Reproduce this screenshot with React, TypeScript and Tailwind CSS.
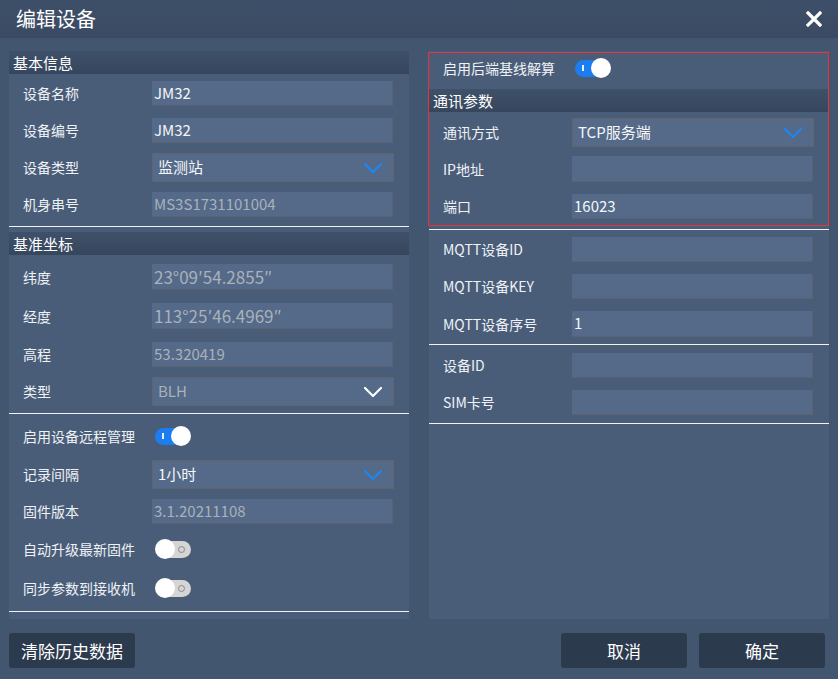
import { ReactNode } from "react";

const font = { fontFamily: '"Noto Sans CJK SC", "Noto Sans", sans-serif' };

function SectionTitle({ children }: { children: ReactNode }) {
  return (
    <div className="flex h-[23px] items-center bg-gradient-to-b from-[#3f506a] to-[#36465d] px-[4px] text-[15px] leading-none text-white">
      {children}
    </div>
  );
}

function Divider({ className = "" }: { className?: string }) {
  return <div className={`h-px bg-[#f2f2f2] ${className}`} />;
}

function Field({
  label,
  value = "",
  muted = false,
  big = false,
  className = "",
  h = "h-[25px]",
}: {
  label: string;
  value?: string;
  muted?: boolean;
  big?: boolean;
  className?: string;
  h?: string;
}) {
  return (
    <div className={`flex items-center ${className}`}>
      <div className="w-[143px] pl-[14px] text-[14px] text-[#eef2f7]">{label}</div>
      <div
        className={`flex w-[241px] items-center border-r border-b border-[#5a6170] bg-[#546a88] px-[2px] ${h} ${
          big ? "text-[17px]" : "text-[15px]"
        } ${muted ? "text-[#a9b1bb]" : "text-[#f4f6f9]"}`}
      >
        {value}
      </div>
    </div>
  );
}

function SelectField({
  label,
  value,
  muted = false,
  className = "",
}: {
  label: string;
  value: string;
  muted?: boolean;
  className?: string;
}) {
  return (
    <div className={`flex items-center ${className}`}>
      <div className="w-[143px] pl-[14px] text-[14px] text-[#eef2f7]">{label}</div>
      <div
        className={`flex h-[29px] w-[242px] items-center justify-between border border-[#62646a] bg-[#546a88] pl-[5px] pr-[10px] text-[15px] ${
          muted ? "text-[#a9b1bb]" : "text-[#f4f6f9]"
        }`}
      >
        <span>{value}</span>
        <svg width="20" height="12" viewBox="0 0 20 12" fill="none">
          <path
            d="M2 2 L10 10 L18 2"
            stroke={muted ? "#ffffff" : "#1e86f2"}
            strokeWidth="2.2"
            strokeLinecap="round"
            strokeLinejoin="round"
          />
        </svg>
      </div>
    </div>
  );
}

function Toggle({ on }: { on: boolean }) {
  if (on) {
    return (
      <div className="relative h-[22px] w-[36px]">
        <div className="absolute left-0 top-[3px] h-[17px] w-[28px] rounded-full bg-[#1b7df0]" />
        <div className="absolute left-[7px] top-[8px] h-[6px] w-[2px] bg-white/90" />
        <div className="absolute right-0 top-[1px] h-[20px] w-[20px] rounded-full bg-white" />
      </div>
    );
  }
  return (
    <div className="relative h-[22px] w-[36px]">
      <div className="absolute right-0 top-[3px] h-[17px] w-[30px] rounded-full bg-[#d5d5d5]" />
      <div className="absolute right-[6px] top-[8px] h-[7px] w-[7px] rounded-full border border-[#888]" />
      <div className="absolute left-0 top-[1px] h-[20px] w-[20px] rounded-full bg-white" />
    </div>
  );
}

function ToggleRow({ label, on, className = "" }: { label: string; on: boolean; className?: string }) {
  return (
    <div className={`flex h-[22px] items-center ${className}`}>
      <div className="w-[146px] pl-[14px] text-[14px] text-[#eef2f7]">{label}</div>
      <Toggle on={on} />
    </div>
  );
}

export default function App() {
  return (
    <div style={font} className="flex h-[679px] w-[838px] flex-col bg-[#43566f]">
      {/* Header */}
      <div className="flex h-[38px] items-center justify-between bg-gradient-to-b from-[#3e4f69] to-[#3a4a62] pl-[16px] pr-[16px]">
        <span className="text-[20px] text-white">编辑设备</span>
        <svg width="16" height="16" viewBox="0 0 16 16">
          <path d="M2 2 L14 14 M14 2 L2 14" stroke="#fff" strokeWidth="3.2" strokeLinecap="square" />
        </svg>
      </div>

      <div className="flex gap-[20px] px-[9px] pt-[13px]">
        {/* Left panel */}
        <div className="flex h-[568px] w-[400px] flex-col bg-[#4a5d78]">
          <SectionTitle>基本信息</SectionTitle>
          <Field label="设备名称" value="JM32" className="mt-[7px]" />
          <Field label="设备编号" value="JM32" className="mt-[12px]" />
          <SelectField label="设备类型" value="监测站" className="mt-[10px]" />
          <Field label="机身串号" value="MS3S1731101004" muted className="mt-[10px]" />
          <Divider className="mt-[9px]" />
          <div className="mt-[5px]">
            <SectionTitle>基准坐标</SectionTitle>
          </div>
          <Field label="纬度" value="23°09′54.2855″" muted big h="h-[26px]" className="mt-[9px]" />
          <Field label="经度" value="113°25′46.4969″" muted big h="h-[26px]" className="mt-[13px]" />
          <Field label="高程" value="53.320419" muted className="mt-[13px]" />
          <SelectField label="类型" value="BLH" muted className="mt-[10px]" />
          <Divider className="mt-[7px]" />
          <ToggleRow label="启用设备远程管理" on className="mt-[11px]" />
          <SelectField label="记录间隔" value="1小时" className="mt-[13px]" />
          <Field label="固件版本" value="3.1.20211108" muted className="mt-[10px]" />
          <ToggleRow label="自动升级最新固件" on={false} className="mt-[14px]" />
          <ToggleRow label="同步参数到接收机" on={false} className="mt-[17px]" />
          <Divider className="mt-[12px]" />
        </div>

        {/* Right panel */}
        <div className="flex h-[568px] w-[400px] flex-col bg-[#4a5d78]">
          <div className="-ml-px mt-px flex h-[174px] flex-col border border-[#e8333a]">
            <ToggleRow label="启用后端基线解算" on className="mt-[4px]" />
            <div className="mt-[10px]">
              <SectionTitle>通讯参数</SectionTitle>
            </div>
            <SelectField label="通讯方式" value="TCP服务端" className="mt-[6px]" />
            <Field label="IP地址" className="mt-[9px]" h="h-[26px]" />
            <Field label="端口" value="16023" className="mt-[12px]" />
          </div>
          <Divider className="mt-[3px]" />
          <Field label="MQTT设备ID" className="mt-[7px]" />
          <Field label="MQTT设备KEY" className="mt-[12px]" />
          <Field label="MQTT设备序号" value="1" h="h-[26px]" className="mt-[12px]" />
          <Divider className="mt-[7px]" />
          <Field label="设备ID" className="mt-[8px]" />
          <Field label="SIM卡号" className="mt-[12px]" />
          <Divider className="mt-[8px]" />
        </div>
      </div>

      {/* Footer */}
      <div className="mt-[14px] flex items-center justify-between px-[9px]">
        <button className="h-[35px] w-[126px] rounded-[3px] bg-[#2c3a4e] text-[17px] text-white">
          清除历史数据
        </button>
        <div className="flex gap-[12px] pr-[4px]">
          <button className="h-[35px] w-[126px] rounded-[3px] bg-[#2c3a4e] text-[17px] text-white">
            取消
          </button>
          <button className="h-[35px] w-[126px] rounded-[3px] bg-[#2c3a4e] text-[17px] text-white">
            确定
          </button>
        </div>
      </div>
    </div>
  );
}
